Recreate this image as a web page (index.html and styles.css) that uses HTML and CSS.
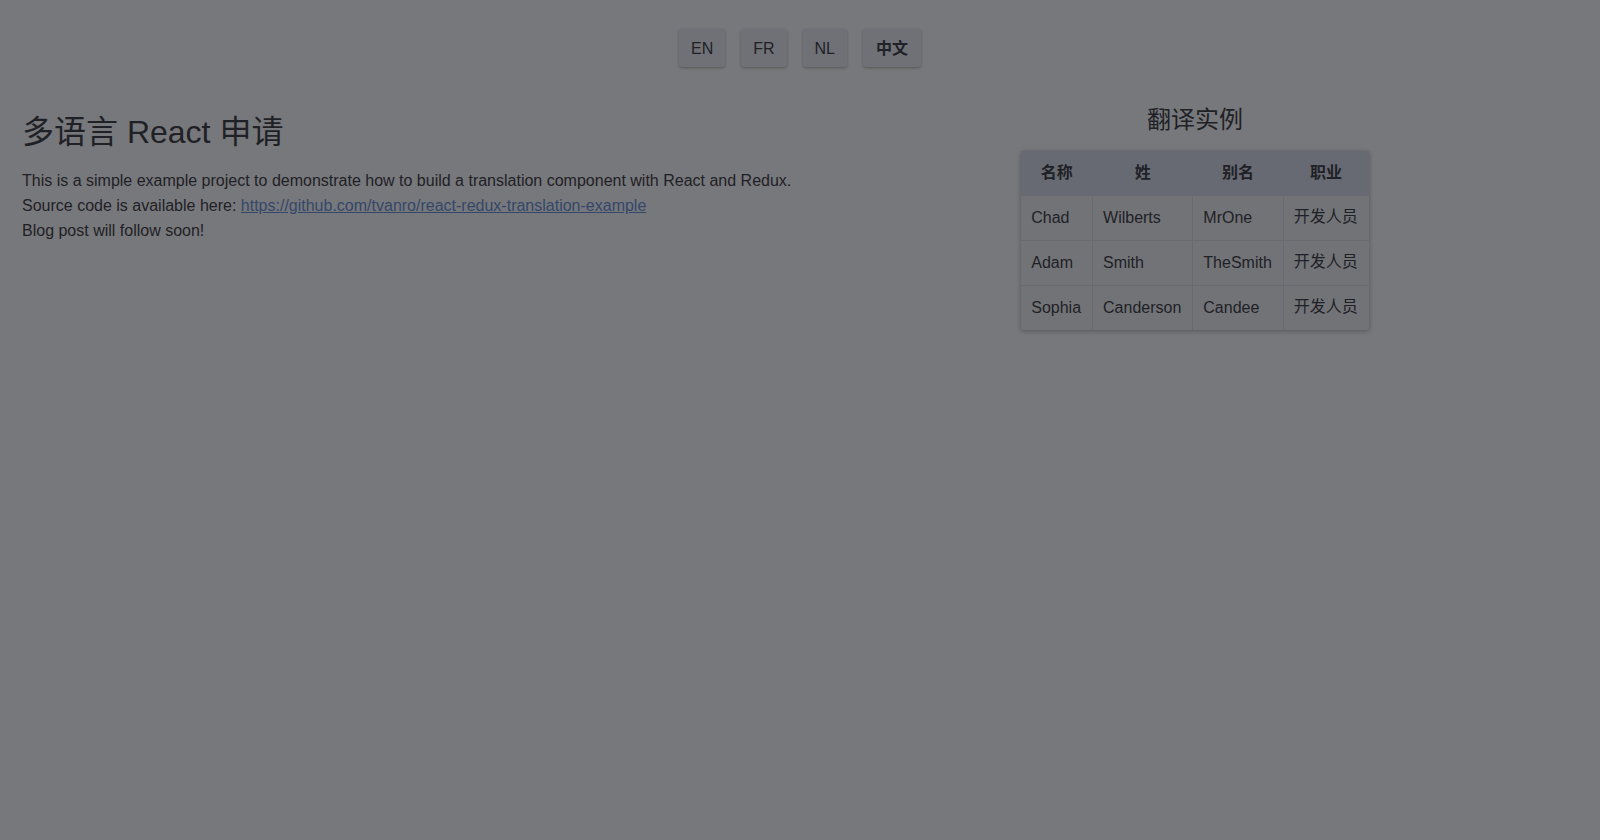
FILE: index.html
```html
<!DOCTYPE html>
<html lang="zh">
<head>
<meta charset="utf-8">
<title>多语言 React 申请</title>
<link rel="stylesheet" href="styles.css">
</head>
<body>
<div class="page">
  <nav class="lang-bar">
    <button class="lang-btn">EN</button>
    <button class="lang-btn">FR</button>
    <button class="lang-btn">NL</button>
    <button class="lang-btn active">中文</button>
  </nav>
  <main class="content">
    <section class="intro">
      <h1 class="title">多语言 React 申请</h1>
      <p class="text">This is a simple example project to demonstrate how to build a translation component with React and Redux.<br>
      Source code is available here: <a class="link" href="#">https://github.com/tvanro/react-redux-translation-example</a><br>
      Blog post will follow soon!</p>
    </section>
    <section class="example">
      <h2 class="subtitle">翻译实例</h2>
      <table class="people">
        <thead>
          <tr><th>名称</th><th>姓</th><th>别名</th><th>职业</th></tr>
        </thead>
        <tbody>
          <tr><td>Chad</td><td>Wilberts</td><td>MrOne</td><td class="cjk">开发人员</td></tr>
          <tr><td>Adam</td><td>Smith</td><td>TheSmith</td><td class="cjk">开发人员</td></tr>
          <tr><td>Sophia</td><td>Canderson</td><td>Candee</td><td class="cjk">开发人员</td></tr>
        </tbody>
      </table>
    </section>
  </main>
</div>
</body>
</html>
```

FILE: styles.css
```css
html, body {
  margin: 0;
  padding: 0;
  height: 100%;
}
body {
  background: #77787b;
  color: #1f2126;
  font-family: "Liberation Sans", Arial, "Noto Sans CJK SC", sans-serif;
  font-size: 16px;
}
.page {
  min-height: 100%;
}
.lang-bar {
  display: flex;
  justify-content: center;
  gap: 16px;
  padding-top: 29px;
}
.lang-btn {
  height: 38px;
  padding: 1px 12px 0;
  border: none;
  border-radius: 3px;
  background: #6f7176;
  color: #1f2126;
  font-family: "Liberation Sans", Arial, "Noto Sans CJK SC", sans-serif;
  font-size: 16px;
  box-shadow: 0 1px 3px rgba(0, 0, 0, 0.28);
  cursor: pointer;
}
.lang-btn.active {
  font-weight: bold;
  padding: 0 13px 3px;
}
.content {
  display: grid;
  grid-template-columns: 1fr 460px;
  padding: 0 175px 0 22px;
}
.title {
  margin: 46px 0 0;
  font-size: 32px;
  font-weight: normal;
  line-height: 38px;
}
.text {
  margin: 17px 0 0;
  line-height: 25px;
}
.link {
  color: #34476a;
  text-decoration: underline;
}
.example {
  display: flex;
  flex-direction: column;
  align-items: center;
}
.subtitle {
  margin: 39px 0 0;
  font-size: 24px;
  font-weight: normal;
  line-height: 28px;
}
.people {
  margin-top: 17px;
  border-collapse: collapse;
  background: #727377;
  border-radius: 3px;
  box-shadow: 0 1px 5px rgba(0, 0, 0, 0.3);
}
.people th {
  background: #676a72;
  font-weight: bold;
  height: 44px;
  padding: 0 11px;
  text-align: center;
  line-height: 20px;
}
.people td {
  height: 44px;
  padding: 0 11px 0 10px;
  border: 1px solid #696a6f;
  text-align: left;
  line-height: 20px;
}
.people td.cjk {
  height: 42px;
  padding-bottom: 2px;
}
.people tr td:first-child {
  border-left: none;
}
.people tr td:last-child {
  border-right: none;
}
.people tbody tr:last-child td {
  border-bottom: none;
}
```
